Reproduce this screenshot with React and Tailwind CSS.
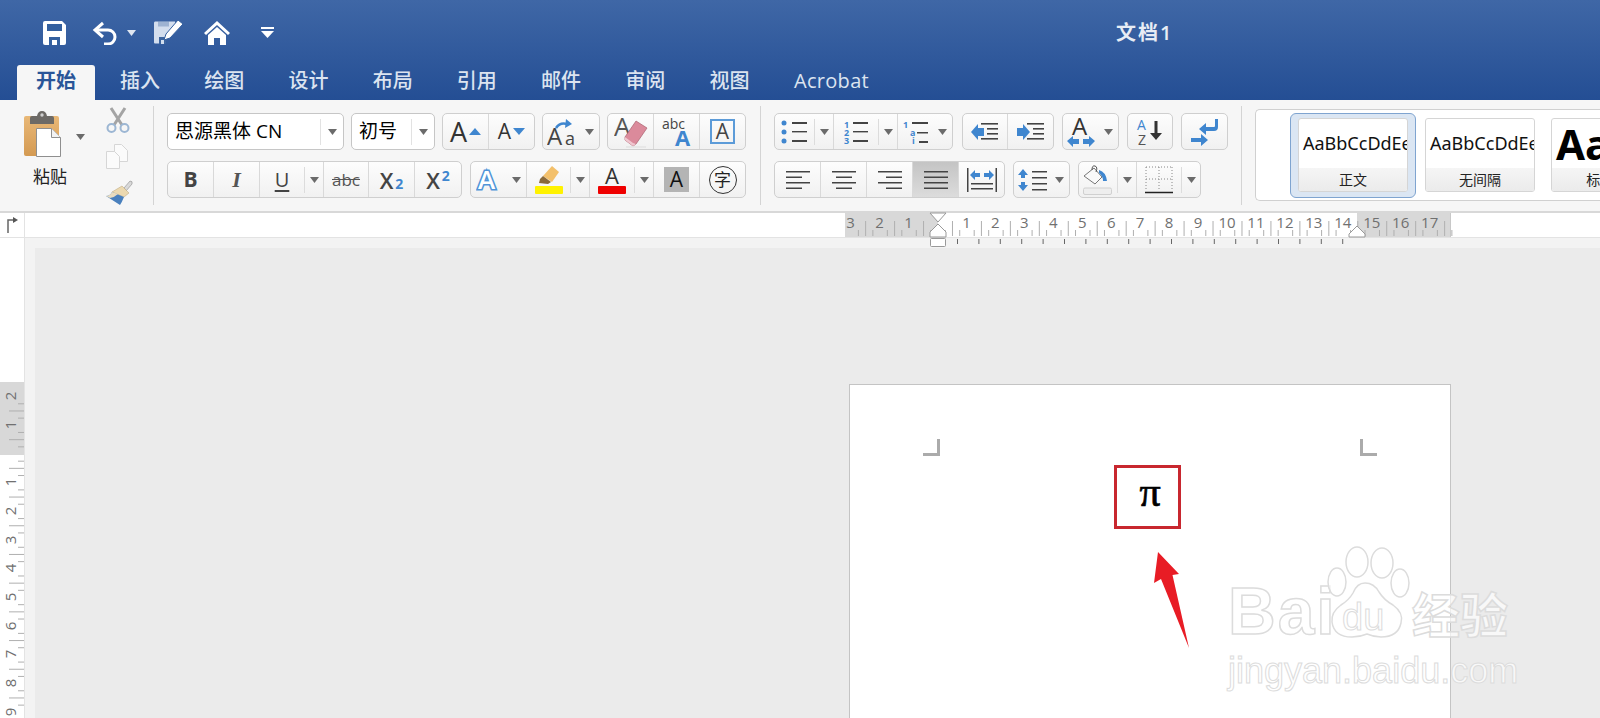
import React from 'react';

const FONT = '"Open Sans","Noto Sans CJK SC",sans-serif';
const BLUE = '#3f86cf';

function Caret({ color = '#6b6b6b' }) {
  return (
    <svg width="9" height="6" viewBox="0 0 9 6" className="shrink-0">
      <path d="M0 0h9L4.5 6z" fill={color} />
    </svg>
  );
}

function Group({ children }) {
  return (
    <div className="flex h-[37px] shrink-0 rounded-[5px] border border-[#cfcfcf] bg-gradient-to-b from-[#fdfdfd] to-[#f1f1f1] divide-x divide-[#d9d9d9] overflow-hidden">
      {children}
    </div>
  );
}

function Cell({ w, children, active }) {
  return (
    <div
      style={{ width: w }}
      className={`h-full flex items-center justify-center shrink-0 ${active ? 'bg-gradient-to-b from-[#c4c4c4] to-[#dcdcdc]' : ''}`}
    >
      {children}
    </div>
  );
}

// cell with a split dropdown on the right side
function Split({ w, arrow = 19, children, divider = true }) {
  return (
    <div style={{ width: w }} className="h-full flex items-center shrink-0">
      <div className="flex-1 flex items-center justify-center h-full">{children}</div>
      <div
        style={{ width: arrow }}
        className={`h-[26px] flex items-center justify-center ${divider ? 'border-l border-[#dcdcdc]' : ''}`}
      >
        <Caret />
      </div>
    </div>
  );
}

function Select({ w, label }) {
  return (
    <div
      style={{ width: w }}
      className="h-[37px] shrink-0 flex items-center rounded-[5px] border border-[#c6c6c6] bg-white pl-[7px]"
    >
      <span className="flex-1 text-[19px] leading-none text-black whitespace-nowrap">{label}</span>
      <div className="w-[23px] h-[26px] border-l border-[#e2e2e2] flex items-center justify-center">
        <Caret />
      </div>
    </div>
  );
}

function SaveIcon() {
  return (
    <svg width="23" height="24" viewBox="0 0 23 24">
      <path d="M2 0h17l4 4v18a2 2 0 0 1-2 2H2a2 2 0 0 1-2-2V2a2 2 0 0 1 2-2z" fill="#fff" />
      <rect x="4" y="3" width="15" height="7" fill="#34609f" />
      <path d="M6 24v-8h11v8h-3v-5H9v5z" fill="#34609f" />
    </svg>
  );
}

function UndoIcon() {
  return (
    <svg width="26" height="24" viewBox="0 0 26 24" fill="none" stroke="#fff" strokeWidth="3">
      <path d="M11 2L3 9l8 7" />
      <path d="M3 9h13a7 7 0 0 1 0 14h-4" />
    </svg>
  );
}

function EditIcon() {
  return (
    <svg width="30" height="25" viewBox="0 0 30 25">
      <path d="M2 1.500h20v5l-8 9-2 8H2q-1 0-1-1V3q0-1.500 1-1.500z" fill="#d3deee" />
      <path d="M5 1.500h11v5H5z" fill="#3d659f" fillOpacity="0.35" />
      <path d="M6 24v-7h8l-1.500 7z" fill="#3d659f" />
      <path d="M8 24v-4h3v4z" fill="#d3deee" />
      <path d="M25 0l5 4-13 14-6 2 2-6z" fill="#fff" stroke="#34609f" strokeWidth="1" />
    </svg>
  );
}

function HomeIcon() {
  return (
    <svg width="26" height="24" viewBox="0 0 26 24" fill="#fff">
      <path d="M13 0l13 12-2 2L13 4 2 14l-2-2z" />
      <path d="M4 14l9-8 9 8v10h-6v-7h-6v7H4z" />
    </svg>
  );
}

function QatMore() {
  return (
    <svg width="13" height="11" viewBox="0 0 13 11" fill="#fff">
      <rect width="13" height="2" />
      <path d="M0 4h13L6.5 11z" />
    </svg>
  );
}

function Clipboard() {
  return (
    <svg width="37" height="46" viewBox="0 0 37 46" className="shrink-0">
      <defs>
        <linearGradient id="board" x1="0" y1="0" x2="0" y2="1">
          <stop offset="0" stopColor="#e9b877" />
          <stop offset="1" stopColor="#d49a52" />
        </linearGradient>
      </defs>
      <rect x="0" y="5" width="35" height="40" rx="2" fill="url(#board)" />
      <path d="M6 13V7q0-2 2-2h5q1-5 5-5t5 5h5q2 0 2 2v6z" fill="#6d6a66" />
      <circle cx="18" cy="4" r="1.7" fill="#cfcfcf" />
      <path d="M12.500 17.500h15l9 9v19h-24z" fill="#fff" stroke="#8f8f8f" />
      <path d="M27.500 17.500v9h9" fill="#f2f2f2" stroke="#8f8f8f" />
    </svg>
  );
}

function CutIcon() {
  return (
    <svg width="24" height="26" viewBox="0 0 24 26" fill="none">
      <path d="M5 1l11 17M19 1L8 18" stroke="#a4a4a4" strokeWidth="3" />
      <circle cx="5.500" cy="21" r="4" stroke="#9cb6d3" strokeWidth="2" />
      <circle cx="18.500" cy="21" r="4" stroke="#9cb6d3" strokeWidth="2" />
    </svg>
  );
}

function CopyIcon() {
  return (
    <svg width="22" height="25" viewBox="0 0 22 25" fill="#fbfbfb" stroke="#d6d6d6">
      <path d="M8.500 0.500h7l6 6v11h-13z" />
      <path d="M0.500 7.500h8l5 5v12h-13z" />
    </svg>
  );
}

function BrushIcon() {
  return (
    <svg width="27" height="25" viewBox="0 0 27 25">
      <path d="M18 8l6-7q3 0 2 3l-6 7z" fill="#d9d9d9" stroke="#9a9a9a" strokeWidth="0.7" />
      <path d="M16 6l7 7-5 4L6 12z" fill="#ecd9b0" stroke="#b9a377" strokeWidth="0.5" />
      <path d="M0 16q4 0 6-4l12 5q-2 5-4 8z" fill="#4a80bd" />
      <path d="M0 16q4 0 6-4l6 2q-3 3-8 4z" fill="#e9dcc0" />
    </svg>
  );
}

const ICON_TEXT = { fontFamily: FONT };

function GrowIcon() {
  return (
    <div className="flex items-center gap-[2px]">
      <span className="text-[27px] leading-none font-medium text-[#333]">A</span>
      <svg width="12" height="7"><path d="M0 7L6 0l6 7z" fill={BLUE} /></svg>
    </div>
  );
}

function ShrinkIcon() {
  return (
    <div className="flex items-center gap-[2px]">
      <span className="text-[21px] leading-none font-medium text-[#333]">A</span>
      <svg width="12" height="7"><path d="M0 0l6 7 6-7z" fill={BLUE} /></svg>
    </div>
  );
}

function CaseIcon() {
  return (
    <svg width="30" height="28" viewBox="0 0 30 28" style={ICON_TEXT}>
      <text x="0" y="27" fontSize="24" fontWeight="500" fill="#444">A</text>
      <text x="18" y="27" fontSize="18" fontWeight="500" fill="#444">a</text>
      <path d="M9 10q4-6 11-4" fill="none" stroke={BLUE} strokeWidth="2.500" />
      <path d="M19 1l6 5-7 4z" fill={BLUE} />
    </svg>
  );
}

function EraserIcon() {
  return (
    <svg width="34" height="32" viewBox="0 0 34 32" style={ICON_TEXT}>
      <text x="0" y="20" fontSize="26" fontWeight="500" fill="#555">A</text>
      <path d="M22 5l11 7-11 16-3 2-8-6 0-3z" fill="#db8a9b" stroke="#a9606f" strokeWidth="0.7" />
      <path d="M11 21l8 6 3 1-3 2-8-6z" fill="#f0c6cf" />
      <path d="M12 31h20" stroke="#ddd" strokeWidth="1" />
    </svg>
  );
}

function AbcAIcon() {
  return (
    <svg width="30" height="30" viewBox="0 0 30 30" style={ICON_TEXT}>
      <text x="0" y="12" fontSize="14" fill="#444">abc</text>
      <text x="13" y="29" fontSize="22" fontWeight="700" fill={BLUE}>A</text>
    </svg>
  );
}

function BoxAIcon() {
  return (
    <div className="w-[25px] h-[25px] border-2 border-[#5c9bd8] flex items-center justify-center text-[21px] leading-none text-[#444]">A</div>
  );
}

function Super({ sub }) {
  return (
    <div className={`flex ${sub ? 'items-end' : 'items-start'} leading-none`}>
      <span className="text-[22px] font-semibold text-[#444]">X</span>
      <span className="text-[14px] font-bold text-[#3f86cf] ml-[2px]">2</span>
    </div>
  );
}

function GlowA() {
  return (
    <svg width="26" height="26" viewBox="0 0 26 26" style={ICON_TEXT}>
      <text x="2" y="22" fontSize="26" fontWeight="600" fill="#fff" stroke="#4f94d8" strokeWidth="3.200" paintOrder="stroke">A</text>
    </svg>
  );
}

function Highlighter() {
  return (
    <svg width="30" height="29" viewBox="0 0 30 29">
      <path d="M18 1l7 6-7 10-9-6z" fill="#f3c06b" />
      <path d="M9 11l8 6-3 2-9-1 1-4z" fill="#8a6a3a" />
      <rect x="1" y="21" width="28" height="8" rx="1" fill="#fff200" />
    </svg>
  );
}

function ColorA() {
  return (
    <div className="flex flex-col items-center">
      <span className="text-[22px] leading-[21px] font-medium text-[#333]">A</span>
      <div className="w-[28px] h-[8px] rounded-[1px] bg-[#ef0000]" />
    </div>
  );
}

function ListLines({ x = 11, w = 14, gap = 9, y = 3 }) {
  return (
    <>
      {[0, 1, 2].map((i) => (
        <rect key={i} x={x} y={y + i * gap} width={w} height={i == 1 ? 1.4 : 2} fill="#444" />
      ))}
    </>
  );
}

function BulletIcon() {
  return (
    <svg width="27" height="24" viewBox="0 0 27 24">
      {[3, 12, 21].map((y) => <circle key={y} cx="3" cy={y} r="2.500" fill={BLUE} />)}
      <ListLines x={11} w={15} y={2} />
    </svg>
  );
}

function NumberIcon() {
  return (
    <svg width="25" height="24" viewBox="0 0 25 24" style={ICON_TEXT}>
      {['1', '2', '3'].map((t, i) => (
        <text key={t} x="0" y={8 + i * 8} fontSize="9" fontWeight="700" fill={BLUE}>{t}</text>
      ))}
      <ListLines x={9} w={15} y={2} />
    </svg>
  );
}

function MultiIcon() {
  return (
    <svg width="25" height="24" viewBox="0 0 25 24" style={ICON_TEXT}>
      <text x="0" y="8" fontSize="9" fontWeight="700" fill={BLUE}>1</text>
      <text x="7" y="16" fontSize="9" fontWeight="700" fill={BLUE}>a</text>
      <text x="9" y="24" fontSize="9" fontWeight="700" fill={BLUE}>i</text>
      <rect x="9" y="2" width="16" height="2" fill="#444" />
      <rect x="14" y="12" width="11" height="1.500" fill="#444" />
      <rect x="16" y="21" width="9" height="2" fill="#444" />
    </svg>
  );
}

function IndentIcon({ flip }) {
  return (
    <svg width="28" height="20" viewBox="0 0 28 20">
      <path d={flip ? 'M0 6h6V2l7 8-7 8v-4H0z' : 'M13 6H7V2L0 10l7 8v-4h6z'} fill={BLUE} />
      {[1, 6, 11, 16].map((y) => (
        <rect key={y} x={y == 1 || y == 16 ? 10 : 16} y={y} width={y == 1 || y == 16 ? 17 : 11} height="1.600" fill="#444" />
      ))}
    </svg>
  );
}

function DirectionIcon() {
  return (
    <svg width="28" height="30" viewBox="0 0 28 30" style={ICON_TEXT}>
      <text x="5" y="18" fontSize="24" fill="#333">A</text>
      <path d="M0 24l6-5v3h6v5H6v3zM28 24l-6-5v3h-6v5h6v3z" fill={BLUE} />
    </svg>
  );
}

function SortIcon() {
  return (
    <svg width="28" height="28" viewBox="0 0 28 28" style={ICON_TEXT}>
      <text x="1" y="12" fontSize="14" fill={BLUE}>A</text>
      <text x="2" y="27" fontSize="14" fill="#555">Z</text>
      <path d="M20 3v14" stroke="#333" strokeWidth="3" />
      <path d="M14 15h12l-6 7z" fill="#333" />
    </svg>
  );
}

function ReturnIcon() {
  return (
    <svg width="28" height="28" viewBox="0 0 28 28" fill={BLUE}>
      <path d="M24 1h3v8q0 4-4 4H15v4L8 11l7-6v4h8q1 0 1-1z" />
      <path d="M0 20h10v-4l7 6-7 6v-4H0z" />
    </svg>
  );
}

function AlignIcon({ mode }) {
  const rows = [24, 16, 24, 16];
  const full = mode == 'justify';
  return (
    <svg width="24" height="20" viewBox="0 0 24 20">
      {rows.map((w, i) => {
        const width = full ? 24 : w;
        const x = full || mode == 'left' ? 0 : mode == 'center' ? (24 - w) / 2 : 24 - w;
        return <rect key={i} x={x} y={1 + i * 5.5} width={width} height="1.500" fill="#444" />;
      })}
    </svg>
  );
}

function DistributeIcon() {
  return (
    <svg width="30" height="24" viewBox="0 0 30 24">
      <rect x="0" y="0" width="1.500" height="24" fill="#444" />
      <rect x="28.500" y="0" width="1.500" height="24" fill="#444" />
      <path d="M3 7l5-5v3h5v4H8v3zM27 7l-5-5v3h-5v4h5v3z" fill={BLUE} />
      <rect x="4" y="15" width="22" height="1.500" fill="#444" />
      <rect x="4" y="20" width="22" height="1.500" fill="#444" />
    </svg>
  );
}

function SpacingIcon() {
  return (
    <svg width="30" height="22" viewBox="0 0 30 22">
      <path d="M6 0l5 6H8v3H4V6H1zM6 22l5-6H8v-3H4v3H1z" fill={BLUE} />
      {[2, 8, 14, 20].map((y) => <rect key={y} x="15" y={y} width="15" height="1.500" fill="#444" />)}
    </svg>
  );
}

function BucketIcon() {
  return (
    <svg width="30" height="30" viewBox="0 0 30 30">
      <path d="M1 11L11 3l8 9-7 7z" fill="#fafafa" stroke="#777" />
      <path d="M9 5q0-5 3-4t1 6" fill="none" stroke="#555" strokeWidth="1" />
      <path d="M16 5q7 2 8 11h-4q0-5-4-8z" fill={BLUE} />
      <rect x="0.500" y="23" width="28" height="6.500" rx="1.500" fill="#eee" stroke="#d0d0d0" />
    </svg>
  );
}

function BorderIcon() {
  return (
    <svg width="28" height="28" viewBox="0 0 28 28" fill="none">
      <path d="M1 1h26M1 13h26M1 1v24M14 1v24M27 1v24" stroke="#888" strokeWidth="1" strokeDasharray="1 2" />
      <path d="M0 26.500h28" stroke="#222" strokeWidth="1.500" />
    </svg>
  );
}

function StyleCard({ label, preview, selected }) {
  const card = (
    <div className="w-[110px] h-[74px] shrink-0 rounded-[3px] border border-[#d5d5d5] bg-white flex flex-col overflow-hidden">
      <div className="h-[49px] flex items-center pl-[4px] overflow-hidden whitespace-nowrap text-[#111]">{preview}</div>
      <div className="flex-1 bg-gradient-to-b from-[#f5f5f5] to-[#ebebeb] flex items-center justify-center text-[14px] text-[#222] whitespace-nowrap">
        {label}
      </div>
    </div>
  );
  if (!selected) return card;
  return (
    <div className="w-[126px] h-[85px] shrink-0 rounded-[6px] border border-[#7fa4d0] bg-[#dbe6f3] flex items-center justify-center">
      {card}
    </div>
  );
}

function TopRuler() {
  const unit = 28.95;
  const origin = 937.5 - 845;
  const nums = [-3, -2, -1, 1, 2, 3, 4, 5, 6, 7, 8, 9, 10, 11, 12, 13, 14, 15, 16, 17];
  const ticks = [];
  for (let i = -12; i <= 71; i++) {
    if (i % 4 === 0) continue;
    ticks.push({ x: origin + (i * unit) / 4, tall: i % 2 === 0 });
  }
  const below = [];
  for (let i = 0; i < 19; i++) below.push(957 - 845 + i * 21.4);
  return (
    <div className="relative w-[606px] h-full">
      <div className="flex h-[24px] border-r border-[#c8c8c8]">
        <div className="w-[93px] bg-[#d8d8d8]" />
        <div className="w-[419px] bg-white" />
        <div className="flex-1 bg-[#d8d8d8]" />
      </div>
      {nums.map((n) => (
        <span
          key={n}
          style={{ left: origin + n * unit - 12 }}
          className="absolute top-0 w-[24px] text-center text-[15px] leading-[18px] text-[#707070]"
        >
          {Math.abs(n)}
        </span>
      ))}
      <svg width="606" height="34" className="absolute left-0 top-0 overflow-visible">
        {ticks.map((t, i) => (
          <rect key={i} x={t.x} y={t.tall ? 8 : 17} width="1" height={t.tall ? 15 : 6} fill="#b0b0b0" />
        ))}
        {below.map((x, i) => (
          <rect key={i} x={x} y="26" width="1" height="5" fill="#666" />
        ))}
        <path d="M85 0h16l-8 9z" fill="#fff" stroke="#999" />
        <path d="M93 11l8 8v5H85v-5z" fill="#fff" stroke="#999" />
        <rect x="85.500" y="25.500" width="15" height="8" rx="1" fill="#fff" stroke="#999" />
        <path d="M512 13l8 8v3h-16v-3z" fill="#fff" stroke="#999" />
      </svg>
    </div>
  );
}

function SideRuler() {
  const unit = 28.7;
  const zero = 453.5 - 238;
  const nums = [-2, -1, 1, 2, 3, 4, 5, 6, 7, 8, 9];
  const ticks = [];
  for (let i = -8; i <= 40; i++) {
    if (i % 4 === 0) continue;
    ticks.push({ y: zero + (i * unit) / 4, tall: i % 2 === 0 });
  }
  return (
    <div className="relative w-[25px] shrink-0 h-full bg-white border-r border-[#e3e3e3]">
      <div className="h-[144px]" />
      <div className="h-[73px] bg-[#d8d8d8]" />
      {nums.map((n) => (
        <span
          key={n}
          style={{ top: zero + n * unit - 9 }}
          className="absolute left-[2px] h-[18px] w-[16px] -rotate-90 text-center text-[15px] leading-[18px] text-[#707070]"
        >
          {Math.abs(n)}
        </span>
      ))}
      <svg width="24" height="480" className="absolute left-0 top-0">
        {ticks.map((t, i) => (
          <rect key={i} x={t.tall ? 9 : 18} y={t.y} width={t.tall ? 15 : 6} height="1" fill="#b0b0b0" />
        ))}
      </svg>
    </div>
  );
}

function Watermark() {
  return (
    <div className="absolute left-[1228px] top-[545px] w-[290px] h-[140px] font-['Liberation_Sans',sans-serif] pointer-events-none">
      <span className="absolute left-0 top-[33px] text-[66px] leading-[66px] font-bold tracking-[2px] text-white/70 [-webkit-text-stroke:1.5px_#dcdcdc]">Bai</span>
      <svg width="100" height="100" viewBox="0 0 100 100" className="absolute left-[92px] top-0" fill="#ffffff" fillOpacity="0.6" stroke="#dcdcdc" strokeWidth="1.500">
        <ellipse cx="37" cy="17" rx="11" ry="15" />
        <ellipse cx="62" cy="18" rx="11" ry="15" />
        <ellipse cx="17" cy="37" rx="9" ry="14" />
        <ellipse cx="80" cy="38" rx="9" ry="14" />
        <path d="M45 38q9 0 14 9 5 8 14 13 11 8 8 18-3 14-20 14-7 0-14-3-7 3-15 3-18 0-20-15-1-10 9-17 8-5 12-12 4-10 12-10z" />
      </svg>
      <span className="absolute left-[114px] top-[53px] text-[38px] leading-[38px] text-white/70 [-webkit-text-stroke:1px_#dcdcdc]">du</span>
      <span className="absolute left-[184px] top-[40px] text-[48px] leading-[54px] font-bold text-white/70 [-webkit-text-stroke:1.5px_#dcdcdc] font-['Noto_Sans_CJK_SC',sans-serif] whitespace-nowrap">经验</span>
      <span className="absolute left-0 top-[106px] text-[36px] leading-[40px] text-white/70 [-webkit-text-stroke:1px_#dcdcdc] whitespace-nowrap">jingyan.baidu.com</span>
    </div>
  );
}

export default function App() {
  const tabs = ['插入', '绘图', '设计', '布局', '引用', '邮件', '审阅', '视图'];

  return (
    <div className="relative w-[1600px] h-[718px] overflow-hidden bg-[#ebebeb]" style={{ fontFamily: FONT }}>
      {/* title bar + tabs */}
      <div className="h-[100px] bg-gradient-to-b from-[#3f67a6] to-[#244e94]">
        <div className="h-[65px] flex items-center pl-[43px] relative">
          <SaveIcon />
          <div className="ml-[26px]"><UndoIcon /></div>
          <div className="ml-[9px]"><Caret color="#dfe6f1" /></div>
          <div className="ml-[17px]"><EditIcon /></div>
          <div className="ml-[21px]"><HomeIcon /></div>
          <div className="ml-[31px]"><QatMore /></div>
          <span className="absolute left-[1116px] top-[20px] text-[20px] leading-[26px] tracking-[2px] font-semibold text-[#e8edf5]">文档1</span>
        </div>
        <div className="h-[35px] flex pl-[17px]">
          <div className="w-[78px] h-full pb-[4px] rounded-t-[3px] bg-[#f6f6f6] flex items-center justify-center text-[20px] font-semibold text-[#2a5598]">
            开始
          </div>
          <div className="ml-[3px] flex">
            {tabs.map((t) => (
              <div key={t} className="w-[84.200px] h-full pb-[4px] flex items-center justify-center text-[20px] font-medium text-[#dce4f0]">
                {t}
              </div>
            ))}
            <div className="w-[120px] h-full pb-[4px] flex items-center justify-center text-[20px] font-medium tracking-[0.3px] text-[#dce4f0]">
              Acrobat
            </div>
          </div>
        </div>
      </div>

      {/* ribbon */}
      <div className="h-[113px] bg-[#f6f6f6] border-b-2 border-[#d8d8d8] flex pt-[6px] overflow-hidden">
        <div className="w-[153px] flex pl-[24px] shrink-0">
          <div className="w-[76px] flex flex-col">
            <div className="flex items-center pt-[5px]">
              <Clipboard />
              <div className="ml-[15px] mt-[6px]"><Caret /></div>
            </div>
            <span className="mt-[9px] pl-[9px] text-[17px] leading-[22px] text-[#222]">粘贴</span>
          </div>
          <div className="flex flex-col items-start gap-[11px] ml-[6px] pt-[1px]">
            <CutIcon />
            <CopyIcon />
            <BrushIcon />
          </div>
        </div>
        <div className="w-px h-[99px] bg-[#d4d4d4] shrink-0" />

        {/* font block */}
        <div className="ml-[13px] mt-[7px] w-[580px] shrink-0 flex flex-col gap-[11px]">
          <div className="flex">
            <Select w={177} label="思源黑体 CN" />
            <div className="ml-[7px]"><Select w={84} label="初号" /></div>
            <div className="ml-[7px]">
              <Group>
                <Cell w={46}><GrowIcon /></Cell>
                <Cell w={45}><ShrinkIcon /></Cell>
              </Group>
            </div>
            <div className="ml-[7px]">
              <Group>
                <Split w={56} divider={false}><CaseIcon /></Split>
              </Group>
            </div>
            <div className="ml-[7px]">
              <Group>
                <Cell w={46}><EraserIcon /></Cell>
                <Cell w={46}><AbcAIcon /></Cell>
                <Cell w={45}><BoxAIcon /></Cell>
              </Group>
            </div>
          </div>
          <div className="flex">
            <Group>
              <Cell w={46}><span className="text-[21px] font-bold text-[#444]">B</span></Cell>
              <Cell w={46}><span className="text-[22px] italic font-['Liberation_Serif',serif] font-bold text-[#555]">I</span></Cell>
              <Split w={64}><span className="text-[20px] font-medium text-[#444] underline underline-offset-[3px]">U</span></Split>
              <Cell w={45}><span className="text-[17px] font-medium text-[#555] line-through">abc</span></Cell>
              <Cell w={46}><Super sub /></Cell>
              <Cell w={46}><Super /></Cell>
            </Group>
            <div className="ml-[8px]">
              <Group>
                <Split w={56} divider={false}><GlowA /></Split>
                <Split w={63}><Highlighter /></Split>
                <Split w={64}><ColorA /></Split>
                <Cell w={46}>
                  <div className="w-[25px] h-[25px] bg-[#b4b4b4] flex items-center justify-center text-[21px] leading-none text-[#111]">A</div>
                </Cell>
                <Cell w={45}>
                  <div className="w-[28px] h-[28px] rounded-full border-[1.5px] border-[#333] flex items-center justify-center text-[17px] leading-none text-[#222]">字</div>
                </Cell>
              </Group>
            </div>
          </div>
        </div>
        <div className="ml-[13px] w-px h-[99px] bg-[#d4d4d4] shrink-0" />

        {/* paragraph block */}
        <div className="ml-[13px] mt-[7px] w-[454px] shrink-0 flex flex-col gap-[11px]">
          <div className="flex">
            <Group>
              <Split w={59}><BulletIcon /></Split>
              <Split w={64}><NumberIcon /></Split>
              <Split w={54} divider={false}><MultiIcon /></Split>
            </Group>
            <div className="ml-[9px]">
              <Group>
                <Cell w={45}><IndentIcon /></Cell>
                <Cell w={45}><IndentIcon flip /></Cell>
              </Group>
            </div>
            <div className="ml-[8px]">
              <Group>
                <Split w={55} divider={false}><DirectionIcon /></Split>
              </Group>
            </div>
            <div className="ml-[8px]">
              <Group>
                <Cell w={44}><SortIcon /></Cell>
              </Group>
            </div>
            <div className="ml-[8px]">
              <Group>
                <Cell w={45}><ReturnIcon /></Cell>
              </Group>
            </div>
          </div>
          <div className="flex">
            <Group>
              <Cell w={46}><AlignIcon mode="left" /></Cell>
              <Cell w={46}><AlignIcon mode="center" /></Cell>
              <Cell w={46}><AlignIcon mode="right" /></Cell>
              <Cell w={46} active><AlignIcon mode="justify" /></Cell>
              <Cell w={45}><DistributeIcon /></Cell>
            </Group>
            <div className="ml-[8px]">
              <Group>
                <Split w={55} divider={false}><SpacingIcon /></Split>
              </Group>
            </div>
            <div className="ml-[8px]">
              <Group>
                <Split w={58}><BucketIcon /></Split>
                <Split w={63}><BorderIcon /></Split>
              </Group>
            </div>
          </div>
        </div>
        <div className="ml-[13px] w-px h-[99px] bg-[#d4d4d4] shrink-0" />

        {/* styles gallery */}
        <div className="ml-[13px] mt-[3px] w-[346px] h-[92px] shrink-0 rounded-l-[5px] border border-r-0 border-[#d0d0d0] bg-white flex items-center pl-[34px] overflow-hidden">
          <StyleCard selected label="正文" preview={<span className="text-[18px] font-['Noto_Sans',sans-serif]">AaBbCcDdEe</span>} />
          <div className="ml-[9px] shrink-0">
            <StyleCard label="无间隔" preview={<span className="text-[18px] font-['Noto_Sans',sans-serif]">AaBbCcDdEe</span>} />
          </div>
          <div className="ml-[16px] shrink-0">
            <StyleCard label="标题 1" preview={<span className="text-[42px] font-bold text-black font-['Noto_Sans',sans-serif]">AaBb</span>} />
          </div>
        </div>
      </div>

      {/* top ruler row */}
      <div className="h-[25px] flex bg-white border-b border-[#e3e3e3]">
        <div className="w-[25px] shrink-0 border-r border-[#e3e3e3] flex items-center justify-center">
          <svg width="12" height="16" viewBox="0 0 12 16">
            <path d="M2 16V3h5" fill="none" stroke="#666" strokeWidth="1.500" />
            <path d="M7 0l5 3-5 3z" fill="#555" />
          </svg>
        </div>
        <div className="ml-[820px]"><TopRuler /></div>
      </div>

      {/* document area */}
      <div className="h-[480px] flex">
        <SideRuler />
        <div className="flex-1 flex flex-col">
          <div className="h-[10px] shrink-0 bg-[#f3f3f3]" />
          <div className="h-[470px] flex">
            <div className="w-[10px] bg-[#f3f3f3]" />
            <div className="flex-1 pt-[136px] pl-[814px]">
              <div className="w-[602px] h-[334px] bg-white border border-b-0 border-[#c4c4c4] px-[73px] pt-[54px]">
                <div className="flex justify-between">
                  <div className="w-[17px] h-[17px] border-r-[3px] border-b-[3px] border-[#ababab]" />
                  <div className="w-[17px] h-[17px] border-l-[3px] border-b-[3px] border-[#ababab]" />
                </div>
                <div className="mt-[14px] text-center text-[42px] leading-[44px] text-black [-webkit-text-stroke:0.7px_#000] font-['Liberation_Serif',serif]">π</div>
              </div>
            </div>
          </div>
        </div>
      </div>

      {/* annotation over the page */}
      <div className="absolute left-[1114px] top-[465px] w-[67px] h-[64px] border-[3px] border-[#c8272f]" />
      <svg width="60" height="110" viewBox="0 0 60 110" className="absolute left-[1140px] top-[545px]">
        <path d="M18 7L39 29 32.500 30 49 103 21 34 14 38z" fill="#e81c25" />
      </svg>
      <Watermark />
    </div>
  );
}
